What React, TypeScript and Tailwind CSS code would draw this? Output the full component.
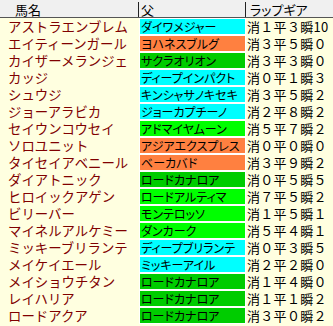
import React from "react";

type Row = { name: string; sire: string; color: string; lap: string };

const C = "bg-[#00ffff]";
const O = "bg-[#ff8040]";
const G = "bg-[#00cc00]";
const L = "bg-[#00ff00]";

const rows: Row[] = [
  { name: "アストラエンブレム", sire: "ダイワメジャー", color: C, lap: "消１平３瞬10" },
  { name: "エイティーンガール", sire: "ヨハネスブルグ", color: O, lap: "消３平５瞬０" },
  { name: "カイザーメランジェ", sire: "サクラオリオン", color: G, lap: "消３平３瞬０" },
  { name: "カッジ", sire: "ディープインパクト", color: C, lap: "消０平１瞬３" },
  { name: "シュウジ", sire: "キンシャサノキセキ", color: C, lap: "消３平５瞬２" },
  { name: "ジョーアラビカ", sire: "ジョーカプチーノ", color: C, lap: "消２平８瞬２" },
  { name: "セイウンコウセイ", sire: "アドマイヤムーン", color: L, lap: "消５平７瞬２" },
  { name: "ソロユニット", sire: "アジアエクスプレス", color: O, lap: "消０平０瞬０" },
  { name: "タイセイアベニール", sire: "ベーカバド", color: O, lap: "消３平９瞬２" },
  { name: "ダイアトニック", sire: "ロードカナロア", color: G, lap: "消０平５瞬５" },
  { name: "ヒロイックアゲン", sire: "ロードアルティマ", color: L, lap: "消７平５瞬２" },
  { name: "ビリーバー", sire: "モンテロッソ", color: L, lap: "消１平５瞬１" },
  { name: "マイネルアルケミー", sire: "ダンカーク", color: L, lap: "消５平４瞬１" },
  { name: "ミッキーブリランテ", sire: "ディープブリランテ", color: C, lap: "消０平３瞬５" },
  { name: "メイケイエール", sire: "ミッキーアイル", color: C, lap: "消２平２瞬０" },
  { name: "メイショウチタン", sire: "ロードカナロア", color: G, lap: "消１平４瞬０" },
  { name: "レイハリア", sire: "ロードカナロア", color: G, lap: "消１平１瞬２" },
  { name: "ロードアクア", sire: "ロードカナロア", color: G, lap: "消３平０瞬２" },
];

export default function App() {
  return (
    <div className="w-[333px] h-[326px] overflow-hidden bg-[#ffffe0] font-['Noto_Sans_CJK_JP',sans-serif] text-black">
      <div className="flex h-[18px] bg-[#f0f0f0] border-b border-[#555555]">
        <div className="w-[139px] mt-[2px] h-[15px] border-r border-[#222222] pl-[15px] text-[13px] leading-[15px]">
          馬名
        </div>
        <div className="w-[107px] mt-[2px] h-[15px] border-r border-[#222222] pl-[2px] text-[13px] leading-[15px]">
          父
        </div>
        <div className="flex-1 mt-[2px] h-[15px] pl-[4px] text-[13px] leading-[15px] [font-feature-settings:'palt']">
          ラップギア
        </div>
      </div>
      {rows.map((r) => (
        <div key={r.name} className="flex h-[17px]">
          <div className="w-[139px] pl-[8px] text-[13.4px] leading-[17px] text-[#800000] whitespace-nowrap">
            {r.name}
          </div>
          <div className="w-[107px] border border-white">
            <div
              className={`h-full ${r.color} pl-[1px] text-[12px] leading-[15px] whitespace-nowrap [font-feature-settings:'palt']`}
            >
              {r.sire}
            </div>
          </div>
          <div className="flex-1 pl-[1px] text-[13px] tracking-[0.3px] leading-[17px] whitespace-nowrap">
            {r.lap}
          </div>
        </div>
      ))}
    </div>
  );
}
